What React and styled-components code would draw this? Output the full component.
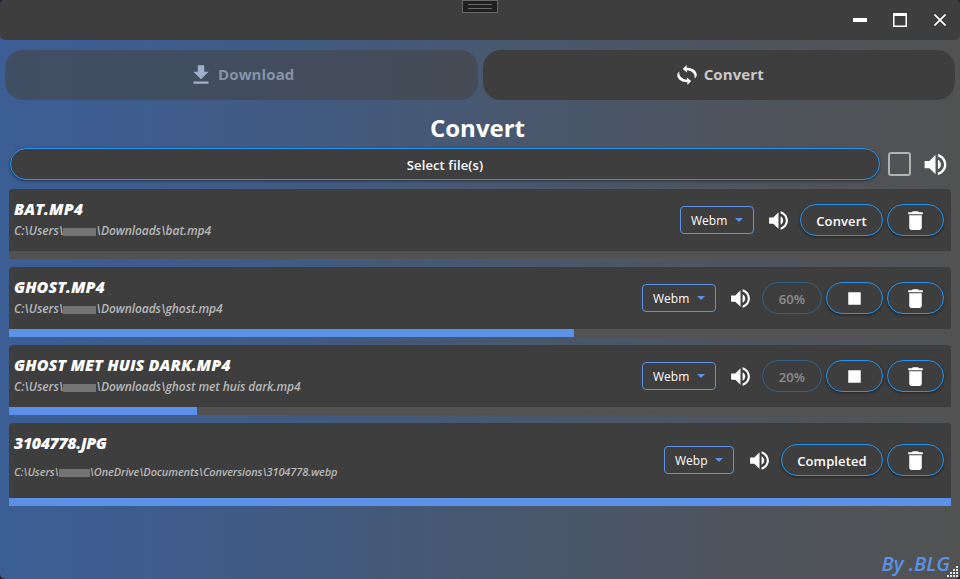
import React from 'react';
import styled, { createGlobalStyle } from 'styled-components';

const GlobalStyle = createGlobalStyle`
  * { box-sizing: border-box; }
  body { margin: 0; background: #202225; overflow: hidden; }
  button { font: inherit; padding: 0; margin: 0; }
  svg { display: block; flex: none; }
`;

const Window = styled.div`
  position: relative;
  width: 960px;
  height: 579px;
  display: flex;
  flex-direction: column;
  overflow: hidden;
  border-radius: 5px;
  background: linear-gradient(90deg, #3b5e95 0%, #405b87 25%, #475870 50%, #4e545d 78%, #525252 100%);
  color: #fff;
  font-family: 'Open Sans', 'Noto Sans', sans-serif;
`;

const TitleBar = styled.header`
  height: 40px;
  flex: none;
  display: flex;
  justify-content: flex-end;
  align-items: center;
  border-radius: 5px;
  background: #3e3e3e;
`;

const WindowButton = styled.button`
  width: 40px;
  height: 40px;
  display: grid;
  place-items: center;
  border: 0;
  background: none;
  color: #fff;
`;

const DebugHandle = styled.div`
  position: absolute;
  left: 462px;
  top: 0;
  width: 36px;
  height: 13px;
  border: 1px solid #686868;
  background: #1f1f1f;
  display: grid;
  place-items: center;
  &::after {
    content: '';
    width: 24px;
    height: 3px;
    border: solid #6a6a6a;
    border-width: 1px 0;
  }
`;

const Tabs = styled.nav`
  display: grid;
  grid-template-columns: 1fr 1fr;
  gap: 5px;
  padding: 10px 5px 0;
`;

const Tab = styled.button`
  height: 50px;
  display: flex;
  align-items: center;
  justify-content: center;
  gap: ${(p) => (p.$active ? 7 : 4)}px;
  padding-left: ${(p) => (p.$active ? 3 : 0)}px;
  border: 0;
  border-radius: 18px;
  background: ${(p) => (p.$active ? '#3e3e3e' : 'rgba(68, 68, 68, 0.6)')};
  color: ${(p) => (p.$active ? '#c9c9c9' : '#8793a8')};
  font-size: 15px;
  line-height: 20px;
  font-weight: 700;
  letter-spacing: 0.1px;
  svg { color: ${(p) => (p.$active ? '#fff' : '#a3afc9')}; }
`;

const TabLabel = styled.span`
  padding-bottom: 2px;
`;

const Heading = styled.h1`
  height: 48px;
  margin: 0;
  padding-right: 5px;
  text-align: center;
  font-size: 24px;
  line-height: 56px;
  font-weight: 700;
`;

const Picker = styled.div`
  height: 32px;
  display: flex;
  align-items: center;
  padding: 0 10px;
`;

const PillButton = styled.button`
  width: ${(p) => (p.$width ? `${p.$width}px` : 'auto')};
  flex: ${(p) => (p.$width ? 'none' : 1)};
  height: 32px;
  display: flex;
  align-items: center;
  justify-content: center;
  border: 1px solid #2196f3;
  border-radius: 16px;
  background: #3e3e3e;
  color: #fff;
  font-size: 13px;
  font-weight: 600;
  line-height: 18px;
  letter-spacing: 0.12px;
  opacity: ${(p) => (p.disabled ? 0.4 : 1)};
  box-shadow: ${(p) => (p.disabled ? 'none' : '0 1px 3px rgba(0, 0, 0, 0.45)')};
`;

const PillLabel = styled.span`
  padding-top: 2px;
`;

const Checkbox = styled.span`
  width: 23px;
  height: 24px;
  margin: 0 10px 0 8px;
  border: 2px solid #b2b2b2;
  border-radius: 3px;
`;

const List = styled.main`
  display: flex;
  flex-direction: column;
  gap: 8px;
  padding: 9px 9px 0;
`;

const Card = styled.article`
  overflow: hidden;
  border-radius: 4px 4px 0 0;
`;

const CardBody = styled.div`
  height: ${(p) => (p.$tall ? 75 : 62)}px;
  display: flex;
  align-items: center;
  padding: 0 7px ${(p) => (p.$tall ? 1 : 0)}px 0;
  background: #3e3e3e;
`;

const FileInfo = styled.div`
  flex: 1;
  align-self: stretch;
  padding: 9px 0 0 5px;
  font-style: italic;
  white-space: nowrap;
`;

const FileName = styled.div`
  height: 22px;
  font-size: 16px;
  line-height: 22px;
  font-weight: 800;
  letter-spacing: ${(p) => p.$spacing}px;
`;

const FilePath = styled.div`
  display: flex;
  height: 20px;
  margin-top: ${(p) => (p.$tall ? 8 : 1)}px;
  font-size: ${(p) => (p.$tall ? 11 : 12)}px;
  line-height: 20px;
  font-weight: 600;
  color: #b8b8b8;
  letter-spacing: ${(p) => (p.$tall ? -0.12 : -0.07)}px;
`;

const Redaction = styled.span`
  width: ${(p) => p.$width}px;
  height: 8px;
  margin-top: 7px;
  background: #747474;
`;

const FormatSelect = styled.button`
  width: ${(p) => p.$width}px;
  height: 28px;
  display: flex;
  align-items: center;
  justify-content: space-between;
  padding: 0 10px;
  border: 1px solid #5b92e8;
  border-radius: 4px;
  background: none;
  color: #fff;
  font-size: 12px;
  line-height: 16px;
`;

const FormatLabel = styled.span`
  padding-top: 2px;
`;

const VolumeSlot = styled.span`
  margin: 0 9px 0 ${(p) => (p.$tall ? 13 : 12)}px;
`;

const Actions = styled.div`
  display: flex;
  gap: 4px;
`;

const Track = styled.div`
  height: 8px;
  background: #525252;
`;

const Fill = styled.div`
  height: 8px;
  background: #5b92e8;
`;

const Signature = styled.footer`
  position: absolute;
  right: 10px;
  bottom: 2px;
  font-size: 20px;
  line-height: 27px;
  font-style: italic;
  font-weight: 600;
  color: #5b92e8;
`;

const Grip = styled.svg`
  position: absolute;
  right: 2px;
  bottom: 2px;
`;

const PATHS = {
  download: 'M5,20H19V18H5M19,9H15V3H9V9H5L12,16L19,9Z',
  volume:
    'M14,3.23V5.29C16.89,6.15 19,8.83 19,12C19,15.17 16.89,17.84 14,18.7V20.77C18,19.86 21,16.28 21,12C21,7.72 18,4.14 14,3.23M16.5,12C16.5,10.23 15.5,8.71 14,7.97V16C15.5,15.29 16.5,13.76 16.5,12M3,9V15H7L12,20V4L7,9H3Z',
  trash:
    'M19,4H15.5L14.5,3H9.5L8.5,4H5V6H19M6,19A2,2 0 0,0 8,21H16A2,2 0 0,0 18,19V7H6V19Z',
  stop: 'M18,18H6V6H18V18Z',
};

const Icon = ({ name, size = 25 }) => (
  <svg width={size} height={size} viewBox="0 0 24 24" fill="currentColor">
    <path d={PATHS[name]} />
  </svg>
);

const SWIRL = 'M5.8 4L9.6 0V2.7C15 2.7 19.4 5.4 19.7 9.4C19.8 11 19 12.4 17.6 13.4C18.7 9.2 15 5.5 9.8 5.2L10.2 7.6Z';

const ConvertIcon = () => (
  <svg width="20" height="20" viewBox="0 0 20 20" fill="currentColor">
    <path d={SWIRL} />
    <path d={SWIRL} transform="rotate(180 10 10)" />
  </svg>
);

const FILES = [
  { name: 'BAT.MP4', nameSpacing: 0.1, path: 'Downloads\\bat.mp4', format: 'Webm', label: 'Convert', progress: 0 },
  { name: 'GHOST.MP4', nameSpacing: 0, path: 'Downloads\\ghost.mp4', format: 'Webm', label: '60%', progress: 60, running: true },
  { name: 'GHOST MET HUIS DARK.MP4', nameSpacing: 0.05, path: 'Downloads\\ghost met huis dark.mp4', format: 'Webm', label: '20%', progress: 20, running: true },
  { name: '3104778.JPG', nameSpacing: -0.4, path: 'OneDrive\\Documents\\Conversions\\3104778.webp', format: 'Webp', label: 'Completed', progress: 100, tall: true },
];

const buttonWidth = (file) => (file.running ? 60 : file.tall ? 102 : 83);

const FileCard = ({ file }) => (
  <Card>
    <CardBody $tall={file.tall}>
      <FileInfo>
        <FileName $spacing={file.nameSpacing}>{file.name}</FileName>
        <FilePath $tall={file.tall}>
          <span>C:\Users\</span>
          <Redaction $width={file.tall ? 31 : 33} />
          <span>\{file.path}</span>
        </FilePath>
      </FileInfo>
      <FormatSelect $width={file.tall ? 70 : 74}>
        <FormatLabel>{file.format}</FormatLabel>
        <svg width="8" height="4" viewBox="0 0 8 4" fill="#5b92e8"><path d="M0 0H8L4 4Z" /></svg>
      </FormatSelect>
      <VolumeSlot $tall={file.tall}><Icon name="volume" /></VolumeSlot>
      <Actions>
        <PillButton $width={buttonWidth(file)} disabled={file.running}>
          <PillLabel>{file.label}</PillLabel>
        </PillButton>
        {file.running && <PillButton $width={57}><Icon name="stop" /></PillButton>}
        <PillButton $width={57}><Icon name="trash" /></PillButton>
      </Actions>
    </CardBody>
    <Track><Fill style={{ width: `${file.progress}%` }} /></Track>
  </Card>
);

const GRIP_DOTS = [[9, 0], [6, 3], [9, 3], [3, 6], [6, 6], [9, 6], [0, 9], [3, 9], [6, 9], [9, 9]];

export default function App() {
  return (
    <>
      <GlobalStyle />
      <Window>
        <TitleBar>
          <WindowButton aria-label="Minimize">
            <svg width="14" height="4"><path d="M0 0H14V4H0Z" fill="currentColor" /></svg>
          </WindowButton>
          <WindowButton aria-label="Maximize">
            <svg width="14" height="14"><path fillRule="evenodd" d="M0 0H14V14H0ZM1.5 3V12.5H12.5V3Z" fill="currentColor" /></svg>
          </WindowButton>
          <WindowButton aria-label="Close">
            <svg width="12" height="12" stroke="currentColor" strokeWidth="1.7"><path d="M.5 .5L11.5 11.5M11.5 .5L.5 11.5" /></svg>
          </WindowButton>
        </TitleBar>
        <DebugHandle />
        <Tabs>
          <Tab><Icon name="download" size={26} /><TabLabel>Download</TabLabel></Tab>
          <Tab $active><ConvertIcon /><TabLabel>Convert</TabLabel></Tab>
        </Tabs>
        <Heading>Convert</Heading>
        <Picker>
          <PillButton><PillLabel>Select file(s)</PillLabel></PillButton>
          <Checkbox />
          <Icon name="volume" size={29} />
        </Picker>
        <List>
          {FILES.map((file) => <FileCard key={file.name} file={file} />)}
        </List>
        <Signature>By .BLG</Signature>
        <Grip width="11" height="11" fill="#e4e4e4">
          {GRIP_DOTS.map(([x, y]) => <rect key={`${x}-${y}`} x={x} y={y} width="2" height="2" />)}
        </Grip>
      </Window>
    </>
  );
}
